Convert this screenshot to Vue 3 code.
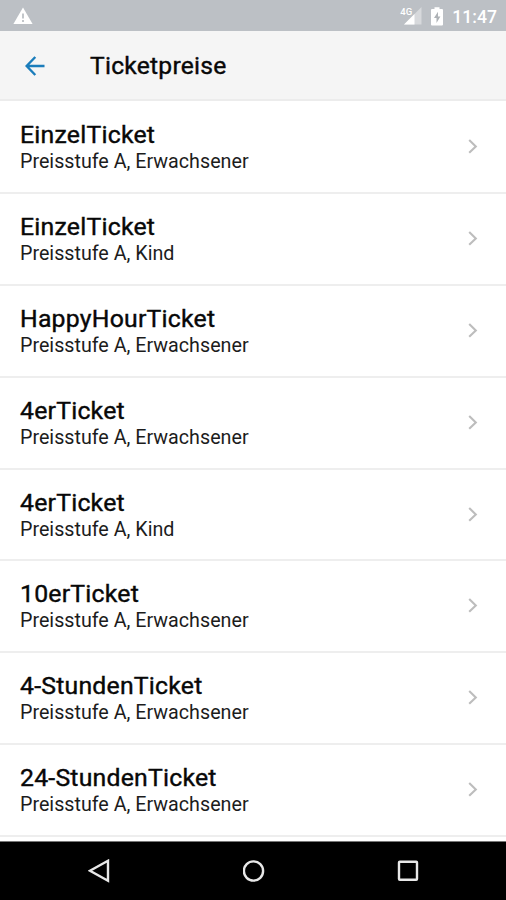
<script setup>
const adult = 'Preisstufe A, Erwachsener'
const child = 'Preisstufe A, Kind'
const tickets = [
  { name: 'EinzelTicket', info: adult },
  { name: 'EinzelTicket', info: child },
  { name: 'HappyHourTicket', info: adult },
  { name: '4erTicket', info: adult },
  { name: '4erTicket', info: child },
  { name: '10erTicket', info: adult },
  { name: '4-StundenTicket', info: adult },
  { name: '24-StundenTicket', info: adult },
]
</script>

<template>
  <div class="screen">
    <div class="status">
      <svg class="warn" width="20" height="18" viewBox="0 0 20 18">
        <path d="M10 0.5 19.6 17H0.4Z" fill="#fff" />
        <path d="M10 6.4v5M10 13v2" stroke="#bcc0c5" stroke-width="1.8" />
      </svg>
      <div class="indicators">
        <div class="signal">
          <span class="net">4G</span>
          <svg width="19" height="18" viewBox="0 0 19 18">
            <path d="M1 17.5 18.5 0V17.5Z" fill="#fff" fill-opacity="0.4" />
            <path d="M1 17.5 11.5 7V17.5Z" fill="#fff" />
          </svg>
        </div>
        <svg class="battery" width="12" height="19" viewBox="0 0 12 19">
          <path d="M1 2h2.5V0.3h5V2H11a1 1 0 0 1 1 1v14.5a1 1 0 0 1-1 1H1a1 1 0 0 1-1-1V3a1 1 0 0 1 1-1Z" fill="#fff" />
          <path d="M7 4.8 3 11h2.5v5L9.4 9.5H7Z" fill="#aeb2b6" />
        </svg>
        <span class="time">11:47</span>
      </div>
    </div>
    <header class="bar">
      <svg class="back" width="20" height="20" viewBox="0 0 20 20" fill="none" stroke="#1b7dbb" stroke-width="2.4">
        <path d="M19.5 10H2M10.3 1 1.6 10l8.7 9" />
      </svg>
      <h1>Ticketpreise</h1>
    </header>
    <main>
      <div v-for="(t, i) in tickets" :key="i" class="row">
        <div class="text">
          <div class="name">{{ t.name }}</div>
          <div class="info">{{ t.info }}</div>
        </div>
        <svg width="10" height="16" viewBox="0 0 10 16" fill="none" stroke="#bdbdbd" stroke-width="2.1">
          <path d="M1.2 1 7.8 7.4l-6.6 6.4" />
        </svg>
      </div>
    </main>
    <nav>
      <svg width="22" height="24" viewBox="0 0 22 24"><path d="M20 1.8V21.8L2 11.8Z" /></svg>
      <svg width="22" height="24" viewBox="0 0 22 24"><circle cx="10.5" cy="12" r="9.6" /></svg>
      <svg width="22" height="24" viewBox="0 0 22 24"><rect x="2" y="2.8" width="18" height="18" rx="0.8" /></svg>
    </nav>
  </div>
</template>

<style>
body {
  margin: 0;
}
</style>

<style scoped>
.screen {
  width: 506px;
  height: 900px;
  overflow: hidden;
  display: flex;
  flex-direction: column;
  background: #fff;
  color: #080808;
  font-family: Roboto, sans-serif;
}
.status {
  box-sizing: border-box;
  height: 31px;
  flex: none;
  display: flex;
  justify-content: space-between;
  align-items: flex-start;
  padding: 7px 9px 0 13px;
  background: #bcc0c5;
  color: #fff;
}
.indicators {
  display: flex;
}
.signal {
  position: relative;
  width: 31px;
  display: flex;
}
.signal svg {
  margin-left: 3px;
}
.net {
  position: absolute;
  left: 0;
  top: 0;
  font-size: 9.5px;
  line-height: 9px;
  font-weight: 500;
}
.time {
  margin-left: 9px;
  font-size: 17.6px;
  line-height: 20px;
  font-weight: 500;
}
.bar {
  box-sizing: border-box;
  height: 70px;
  flex: none;
  display: flex;
  align-items: center;
  padding: 1px 0 0 25px;
  background: #f5f5f5;
  border-bottom: 2px solid #ececec;
}
h1 {
  margin: 0 0 0 45px;
  font-size: 24.6px;
  line-height: 28px;
  font-weight: 400;
  letter-spacing: 0.25px;
  -webkit-text-stroke: 0.4px currentColor;
}
main {
  flex: 1;
  min-height: 0;
  overflow: hidden;
}
.row {
  box-sizing: border-box;
  height: 91.87px;
  display: flex;
  align-items: center;
  justify-content: space-between;
  padding: 0 28px 0 20px;
  border-bottom: 2px solid #eee;
}
.row:first-child {
  height: 93px;
  padding-top: 1px;
}
.text {
  padding-top: 2px;
}
.name {
  font-size: 24.8px;
  line-height: 28px;
  font-weight: 400;
  letter-spacing: 0.22px;
  -webkit-text-stroke: 0.4px currentColor;
}
.info {
  font-size: 19.7px;
  line-height: 26px;
  color: #1c1c1c;
}
nav {
  box-sizing: border-box;
  height: 59px;
  flex: none;
  display: flex;
  align-items: center;
  justify-content: space-between;
  padding: 0 87px 0 88px;
  background: #000;
  border-top: 1px solid #777;
}
nav svg {
  fill: none;
  stroke: #e8e8e8;
  stroke-width: 2.4;
}
</style>
